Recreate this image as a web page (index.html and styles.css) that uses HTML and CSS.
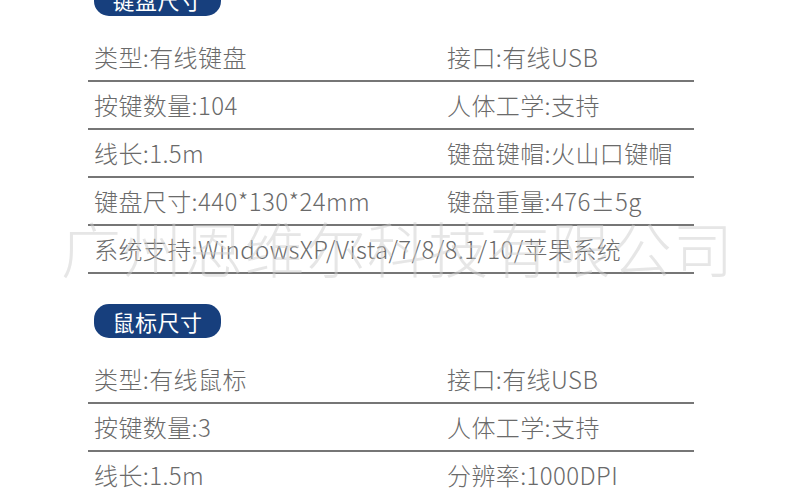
FILE: index.html
```html
<!DOCTYPE html>
<html lang="zh">
<head>
<meta charset="utf-8">
<title>规格参数</title>
<link rel="stylesheet" href="styles.css">
</head>
<body>
<div class="page">
  <section class="spec spec-first">
    <div class="pill">键盘尺寸</div>
    <div class="table">
      <div class="row"><span class="cell">类型:有线键盘</span><span class="cell">接口:有线USB</span></div>
      <div class="row"><span class="cell">按键数量:104</span><span class="cell">人体工学:支持</span></div>
      <div class="row"><span class="cell">线长:1.5m</span><span class="cell">键盘键帽:火山口键帽</span></div>
      <div class="row"><span class="cell">键盘尺寸:440*130*24mm</span><span class="cell">键盘重量:476±5g</span></div>
      <div class="row"><span class="cell full">系统支持:WindowsXP/Vista/7/8/8.1/10/苹果系统</span></div>
    </div>
  </section>
  <section class="spec">
    <div class="pill">鼠标尺寸</div>
    <div class="table">
      <div class="row"><span class="cell">类型:有线鼠标</span><span class="cell">接口:有线USB</span></div>
      <div class="row"><span class="cell">按键数量:3</span><span class="cell">人体工学:支持</span></div>
      <div class="row"><span class="cell">线长:1.5m</span><span class="cell">分辨率:1000DPI</span></div>
    </div>
  </section>
  <div class="watermark">广州恩维尔科技有限公司</div>
</div>
</body>
</html>
```

FILE: styles.css
```css
html, body {
  margin: 0;
  padding: 0;
  background: #ffffff;
}
body {
  font-family: "Noto Sans CJK SC", "Noto Sans", sans-serif;
  overflow: hidden;
}
.page {
  position: relative;
  width: 790px;
  height: 489px;
  overflow: hidden;
  padding-left: 88px;
  box-sizing: border-box;
}
.spec {
  width: 606px;
  margin-top: 30px;
}
.spec-first {
  margin-top: -18px;
}
.pill {
  width: 127px;
  height: 34px;
  margin-left: 6px;
  border-radius: 15px;
  background: #173f7d;
  color: #ffffff;
  font-size: 22px;
  line-height: 34px;
  text-align: center;
  letter-spacing: 0.5px;
}
.table {
  margin-top: 18px;
}
.row {
  display: grid;
  grid-template-columns: 353px 1fr;
  height: 48px;
  box-sizing: border-box;
  border-bottom: 2px solid #767676;
  align-items: center;
}
.cell {
  padding-left: 6px;
  font-size: 24px;
  font-weight: 300;
  letter-spacing: 0.4px;
  color: #6a6a6a;
  white-space: nowrap;
  line-height: 1;
}
.cell.full {
  grid-column: 1 / 3;
}
.watermark {
  position: absolute;
  left: 61px;
  top: 217px;
  font-size: 60px;
  line-height: 60px;
  font-weight: 300;
  letter-spacing: 1.2px;
  color: rgba(205, 205, 205, 0.5);
  white-space: nowrap;
  pointer-events: none;
}
```
